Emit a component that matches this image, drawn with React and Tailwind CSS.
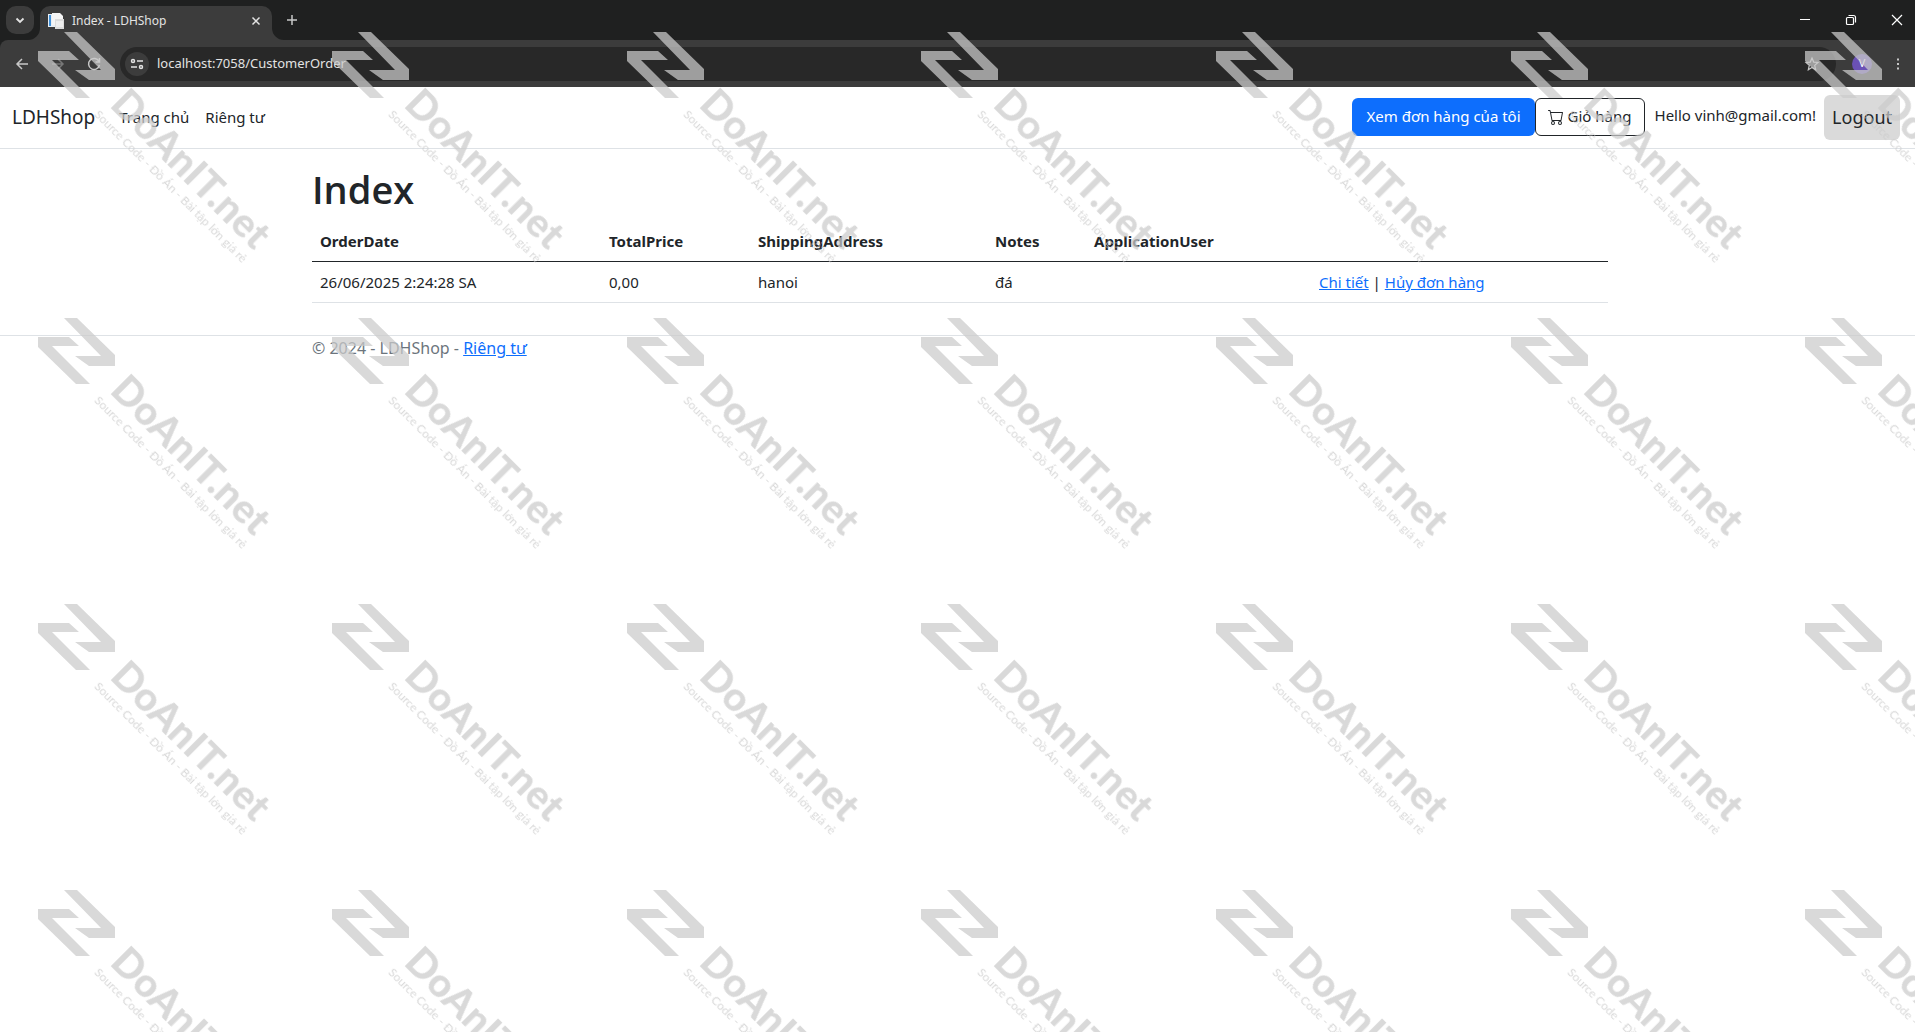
import React from "react";

const MARK_COLUMNS = [38, 332, 627, 921, 1216, 1511, 1805];
const MARK_ROWS = [32, 318, 604, 890];

function WatermarkLayer() {
  return (
    <svg aria-hidden="true" className="pointer-events-none absolute inset-0 h-full w-full" fill="#cbcbcb">
      <defs>
        <g id="mark">
          <path d="M26 0H39L77 37V48H51L37 38H63Z" />
          <path d="M0 19H31L41 28H14L52 66H38L0 29Z" />
          <g transform="translate(72 74) rotate(45)">
            <text x="-1" y="1" fontFamily="Lato, sans-serif" fontSize="40" fontWeight="900">DoAnIT.net</text>
            <text x="-5" y="18" fontFamily="Lato, sans-serif" fontSize="12" fontWeight="400">Source Code - Đồ Án - Bài tập lớn giá rẻ</text>
          </g>
        </g>
      </defs>
      <g opacity="0.73">
        {MARK_ROWS.map((y) => MARK_COLUMNS.map((x) => <use key={`${x}-${y}`} href="#mark" x={x} y={y} />))}
      </g>
    </svg>
  );
}

function Icon({ children, className = "size-4" }) {
  return (
    <svg aria-hidden="true" viewBox="0 0 16 16" className={className} fill="none" stroke="currentColor" strokeWidth="1.5">
      {children}
    </svg>
  );
}

function TabStrip() {
  return (
    <div className="flex h-10 items-end bg-[#1f2020] pl-1.5 text-[#e3e3e3]">
      <button aria-label="Search tabs" className="mb-1.5 grid size-7 place-items-center rounded-[10px] bg-[#3c3c3c]">
        <Icon><path d="M4.500 6.500 8 10l3.500-3.500" strokeWidth="1.800" /></Icon>
      </button>
      <div className="relative ml-1.5 flex h-[34px] w-[232px] items-center rounded-t-[10px] bg-[#3c3c3c] pb-1 pl-2 pr-2">
        <svg aria-hidden="true" viewBox="0 0 12 12" className="absolute -left-3 bottom-0 size-3" fill="#3c3c3c">
          <path d="M12 0v12H0A12 12 0 0 0 12 0Z" />
        </svg>
        <svg aria-hidden="true" viewBox="0 0 12 12" className="absolute -right-3 bottom-0 size-3" fill="#3c3c3c">
          <path d="M0 0v12h12A12 12 0 0 1 0 0Z" />
        </svg>
        <svg aria-hidden="true" viewBox="0 0 16 16" className="size-4">
          <path d="M0 1h9v13H0z" fill="#e8eef4" />
          <path d="M1 2h2v11H1z" fill="#3f8fd8" />
          <path d="M4 0h8l3 3v9H4z" fill="#f5f5f5" />
          <path d="M7 6h9v10H7z" fill="#dcdcdc" />
          <path d="M8 9h7M8 11h7M8 13h7" stroke="#fff" />
        </svg>
        <span className="ml-2 grow text-[12px]">Index - LDHShop</span>
        <button aria-label="Close tab">
          <Icon><path d="m4.500 4.500 7 7m0-7-7 7" /></Icon>
        </button>
      </div>
      <button aria-label="New tab" className="mb-3 ml-3 text-[#c7c7c7]">
        <Icon><path d="M8 3v10M3 8h10" /></Icon>
      </button>
      <div className="mb-3 ml-auto flex gap-[30px] pr-2.5 text-white">
        <button aria-label="Minimize"><Icon><path d="M3 7.500h10" strokeWidth="1" /></Icon></button>
        <button aria-label="Restore">
          <Icon><rect x="3.500" y="5.500" width="7" height="7" rx="1" strokeWidth="1.200" /><path d="M5.500 3.500h5a2 2 0 0 1 2 2v5" strokeWidth="1.200" /></Icon>
        </button>
        <button aria-label="Close window"><Icon><path d="m3 3 10 10m0-10L3 13" strokeWidth="1.200" /></Icon></button>
      </div>
    </div>
  );
}

function Toolbar() {
  return (
    <div className="bg-[#1f2020]">
      <div className="flex h-[47px] items-center rounded-tl-lg bg-[#3c3c3c] pl-3.5 pr-[9px] text-[#c7c7c7]">
        <button aria-label="Back"><Icon><path d="M14 8H3m5-5L3 8l5 5" /></Icon></button>
        <button aria-label="Forward" className="ml-5 text-[#777]"><Icon><path d="M2 8h11M8 3l5 5-5 5" /></Icon></button>
        <button aria-label="Reload" className="ml-5"><Icon><path d="M13 5.500A5.500 5.500 0 1 0 13.500 9M13.500 2v4h-4" /></Icon></button>
        <div className="ml-[18px] flex h-[34px] grow items-center rounded-full bg-[#282828] pl-[5px] pr-4">
          <button aria-label="Site information" className="grid size-6 place-items-center rounded-full bg-[#3c3c3c] text-[#e3e3e3]">
            <Icon>
              <circle cx="4" cy="5" r="1.500" /><path d="M8 5h6M2 11h6" /><circle cx="12" cy="11" r="1.500" />
            </Icon>
          </button>
          <input aria-label="Address" defaultValue="localhost:7058/CustomerOrder" className="ml-2 grow bg-transparent text-[13px] text-[#e3e3e3] outline-none" />
          <button aria-label="Bookmark">
            <Icon><path d="m8 2 1.700 4.100 4.300.4-3.300 2.900 1 4.300L8 11.400l-3.700 2.300 1-4.300L2 6.500l4.300-.4z" strokeWidth="1.200" /></Icon>
          </button>
        </div>
        <button aria-label="Profile" className="ml-4 grid size-5 place-items-center rounded-full bg-[#6a51b5] text-[11px] text-white">V</button>
        <button aria-label="Menu" className="ml-[18px]">
          <Icon><path d="M8 2.500v2M8 7v2M8 11.500v2" strokeWidth="2" /></Icon>
        </button>
      </div>
    </div>
  );
}

function Navbar() {
  return (
    <nav className="flex h-[62px] items-center border-b border-[#dee2e6] pl-3 pr-[15px]">
      <a href="#" className="text-[19px]">LDHShop</a>
      <div className="ml-6 flex gap-4">
        <a href="#">Trang chủ</a>
        <a href="#">Riêng tư</a>
      </div>
      <div className="ml-auto flex items-center">
        <button className="mb-0.5 h-[38px] rounded-md bg-[#0d6efd] px-3.5 text-white">Xem đơn hàng của tôi</button>
        <button className="mb-0.5 flex h-[38px] items-center gap-1 rounded-md border border-[#212529] px-3">
          <svg aria-hidden="true" viewBox="0 0 16 16" className="size-4" fill="currentColor">
            <path d="M0 1.500A.5.500 0 0 1 .5 1H2a.5.500 0 0 1 .485.379L2.890 3H14.500a.5.500 0 0 1 .491.592l-1.500 8A.5.500 0 0 1 13 12H4a.5.500 0 0 1-.491-.408L2.010 3.607 1.610 2H.5a.5.500 0 0 1-.5-.5M3.102 4l1.313 7h8.170l1.313-7zM5 12a2 2 0 1 0 0 4 2 2 0 0 0 0-4m7 0a2 2 0 1 0 0 4 2 2 0 0 0 0-4m-7 1a1 1 0 1 1 0 2 1 1 0 0 1 0-2m7 0a1 1 0 1 1 0 2 1 1 0 0 1 0-2" />
          </svg>
          Giỏ hàng
        </button>
        <a href="#" className="mb-1 pl-2.5 pr-2">Hello vinh@gmail.com!</a>
        <button className="h-[45px] rounded-md bg-[#dadada] px-2 text-[18px]">Logout</button>
      </div>
    </nav>
  );
}

function OrdersTable() {
  return (
    <table className="mb-8 w-full table-fixed text-left leading-6">
      <colgroup>
        <col className="w-[289px]" />
        <col className="w-[149px]" />
        <col className="w-[237px]" />
        <col className="w-[99px]" />
        <col className="w-[225px]" />
        <col />
      </colgroup>
      <thead>
        <tr className="border-b border-[#212529]">
          <th className="p-2">OrderDate</th>
          <th className="p-2">TotalPrice</th>
          <th className="p-2">ShippingAddress</th>
          <th className="p-2">Notes</th>
          <th className="p-2">ApplicationUser</th>
          <th className="p-2"></th>
        </tr>
      </thead>
      <tbody>
        <tr className="border-b border-[#dee2e6]">
          <td className="p-2">26/06/2025 2:24:28 SA</td>
          <td className="p-2">0,00</td>
          <td className="p-2">hanoi</td>
          <td className="p-2">đá</td>
          <td className="p-2"></td>
          <td className="p-2">
            <a href="#" className="text-[#0d6efd] underline">Chi tiết</a> | <a href="#" className="text-[#0d6efd] underline">Hủy đơn hàng</a>
          </td>
        </tr>
      </tbody>
    </table>
  );
}

export default function App() {
  return (
    <div className="relative min-h-screen overflow-hidden bg-white font-['Noto_Sans','Open_Sans',sans-serif] text-[15px] text-[#212529]">
      <TabStrip />
      <Toolbar />
      <Navbar />
      <main className="pl-[5px] pt-4">
        <div className="mx-auto max-w-[1320px] px-3">
          <h1 className="mb-2 font-['Open_Sans',sans-serif] text-[38px] font-semibold leading-[48px]">Index</h1>
          <OrdersTable />
        </div>
      </main>
      <footer className="border-t border-[#dee2e6] pl-[5px] text-[16px] leading-6 text-[#6c757d]">
        <div className="mx-auto max-w-[1320px] px-3">
          © 2024 - LDHShop - <a href="#" className="text-[#0d6efd] underline">Riêng tư</a>
        </div>
      </footer>
      <WatermarkLayer />
    </div>
  );
}
